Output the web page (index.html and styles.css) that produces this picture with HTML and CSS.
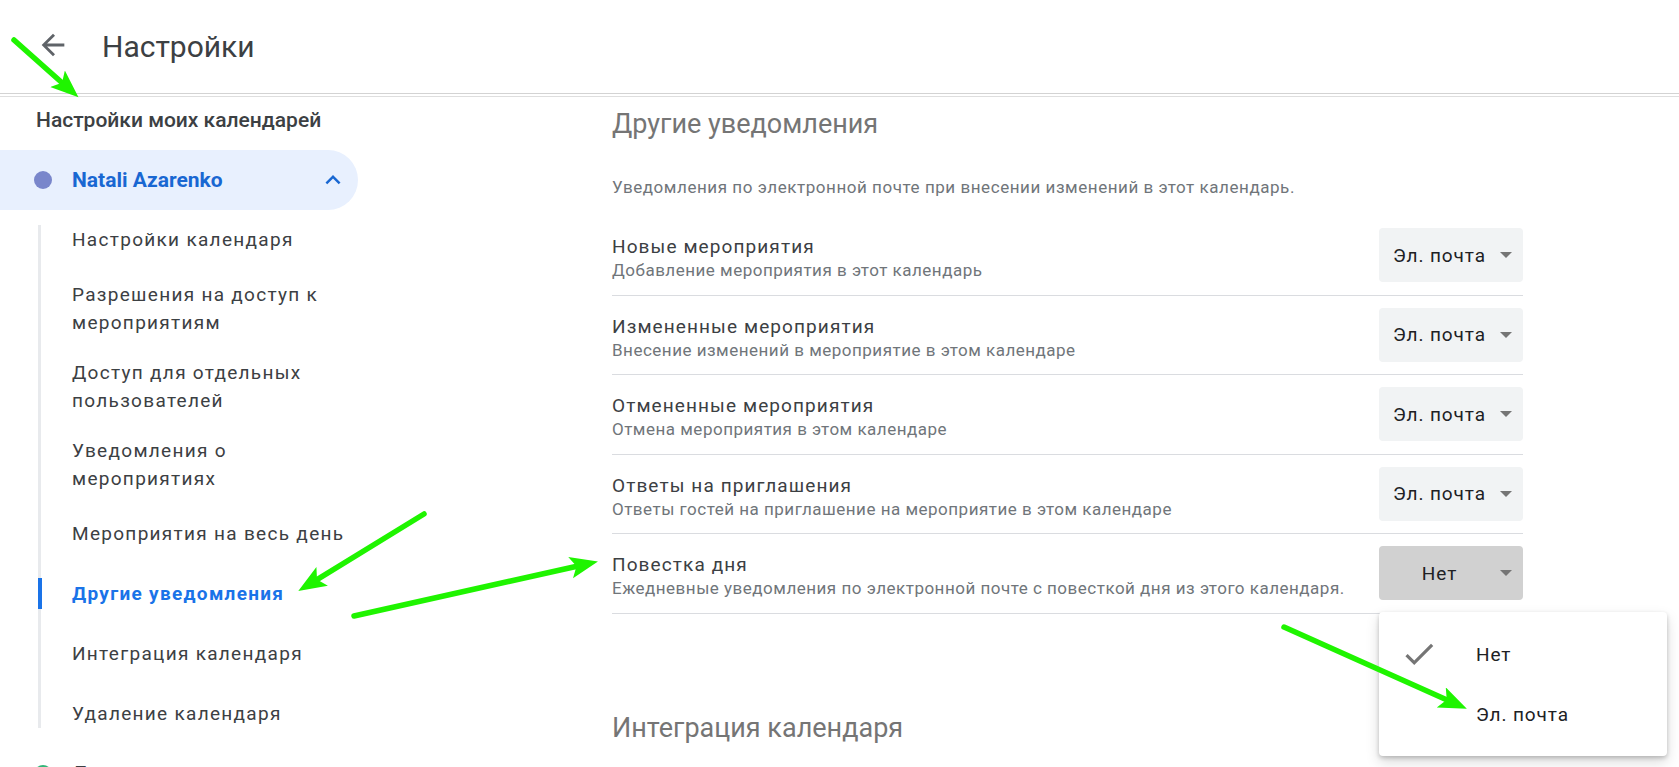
FILE: index.html
```html
<!DOCTYPE html>
<html lang="ru">
  <head>
    <meta charset="UTF-8" />
    <title>Настройки</title>
    <link rel="stylesheet" href="styles.css">
  </head>
  <body>
    <header class="topbar">
      <button class="back-button" aria-label="Назад">
        <svg viewBox="0 0 24 24"><path d="M20 11H7.83l5.59-5.59L12 4l-8 8 8 8 1.41-1.41L7.83 13H20v-2z"/></svg>
      </button>
      <h1 class="topbar-title">Настройки</h1>
    </header>

    <div class="layout">
      <nav class="sidebar">
        <div class="sidebar-heading">Настройки моих календарей</div>

        <div class="calendar-item open">
          <span class="calendar-dot"></span>
          <span class="calendar-name">Natali Azarenko</span>
          <svg class="calendar-chevron" viewBox="0 0 24 24"><path d="M7.41 15.41L12 10.83l4.59 4.58L18 14l-6-6-6 6z"/></svg>
        </div>

        <ul class="calendar-menu">
          <li>Настройки календаря</li>
          <li>Разрешения на доступ к мероприятиям</li>
          <li>Доступ для отдельных пользователей</li>
          <li>Уведомления о мероприятиях</li>
          <li>Мероприятия на весь день</li>
          <li class="active">Другие уведомления</li>
          <li>Интеграция календаря</li>
          <li>Удаление календаря</li>
        </ul>

        <div class="calendar-item">
          <span class="calendar-dot birthdays"></span>
          <span class="calendar-name">Дни рождения</span>
        </div>
      </nav>

      <main class="content">
        <section class="settings-section">
          <h2 class="section-title">Другие уведомления</h2>
          <p class="section-description">Уведомления по электронной почте при внесении изменений в этот календарь.</p>

          <div class="setting-list">
            <div class="setting-row">
              <div class="setting-text">
                <div class="setting-label">Новые мероприятия</div>
                <div class="setting-hint">Добавление мероприятия в этот календарь</div>
              </div>
              <div class="select"><span class="select-value">Эл. почта</span><span class="select-arrow"></span></div>
            </div>

            <div class="setting-row">
              <div class="setting-text">
                <div class="setting-label">Измененные мероприятия</div>
                <div class="setting-hint">Внесение изменений в мероприятие в этом календаре</div>
              </div>
              <div class="select"><span class="select-value">Эл. почта</span><span class="select-arrow"></span></div>
            </div>

            <div class="setting-row">
              <div class="setting-text">
                <div class="setting-label">Отмененные мероприятия</div>
                <div class="setting-hint">Отмена мероприятия в этом календаре</div>
              </div>
              <div class="select"><span class="select-value">Эл. почта</span><span class="select-arrow"></span></div>
            </div>

            <div class="setting-row">
              <div class="setting-text">
                <div class="setting-label">Ответы на приглашения</div>
                <div class="setting-hint">Ответы гостей на приглашение на мероприятие в этом календаре</div>
              </div>
              <div class="select"><span class="select-value">Эл. почта</span><span class="select-arrow"></span></div>
            </div>

            <div class="setting-row">
              <div class="setting-text">
                <div class="setting-label">Повестка дня</div>
                <div class="setting-hint">Ежедневные уведомления по электронной почте с повесткой дня из этого календаря.</div>
              </div>
              <div class="select pressed">
                <span class="select-value">Нет</span><span class="select-arrow"></span>
                <div class="select-menu">
                  <div class="select-option">
                    <svg class="option-check" viewBox="0 0 24 24"><path d="M9 16.17L4.83 12l-1.42 1.41L9 19 21 7l-1.41-1.41z"/></svg>
                    <span>Нет</span>
                  </div>
                  <div class="select-option">
                    <span class="option-check"></span>
                    <span>Эл. почта</span>
                  </div>
                </div>
              </div>
            </div>
          </div>
        </section>

        <section class="settings-section next">
          <h2 class="section-title">Интеграция календаря</h2>
        </section>
      </main>
    </div>

    <!-- green arrows drawn over the screenshot -->
    <svg class="annotations" viewBox="0 0 1679 767">
      <defs>
        <marker id="head" markerUnits="userSpaceOnUse" markerWidth="30" markerHeight="24" refX="18" refY="11" orient="auto">
          <path d="M0 0 L28 11 L0 22 L6 11 z" fill="#1ff400"/>
        </marker>
      </defs>
      <g stroke="#1ff400" stroke-width="5.5" stroke-linecap="round" fill="none" marker-end="url(#head)">
        <line x1="14" y1="40" x2="71" y2="90.7"/>
        <line x1="424" y1="514" x2="306.8" y2="585.8"/>
        <line x1="354" y1="616" x2="588.2" y2="563.7"/>
        <line x1="1284" y1="627" x2="1457.7" y2="704.7"/>
      </g>
    </svg>
  </body>
</html>
```

FILE: styles.css
```css
:root {
  --text-dark: #3c4043;
  --text-gray: #70757a;
  --text-black: #202124;
  --blue: #1a73e8;
  --blue-dark: #1967d2;
  --line: #dadce0;
  --select-bg: #f1f3f4;
}

* {
  margin: 0;
  padding: 0;
  box-sizing: border-box;
}

body {
  font-family: Roboto, 'Liberation Sans', Arial, sans-serif;
  background-color: #ffffff;
  color: var(--text-dark);
  width: 1679px;
  height: 767px;
  overflow: hidden;
  position: relative;
}

/* Top bar */
.topbar {
  height: 94px;
  display: flex;
  align-items: center;
  border-bottom: 1px solid #d3d3d3;
  box-shadow: 0 2px 0 #ffffff, 0 3px 0 #dedede;
}

.back-button {
  width: 34px;
  height: 34px;
  margin-left: 36px;
  margin-bottom: 3px;
  border: none;
  background: none;
  cursor: pointer;
}

.back-button svg {
  width: 34px;
  height: 34px;
  fill: #5f6368;
  display: block;
}

.topbar-title {
  margin-left: 32px;
  font-size: 30px;
  font-weight: 400;
  line-height: 36px;
  color: var(--text-dark);
}

.layout {
  display: flex;
  align-items: flex-start;
}

/* Sidebar */
.sidebar {
  width: 358px;
  flex-shrink: 0;
}

.sidebar-heading {
  margin-top: 12px;
  padding-left: 36px;
  font-size: 21px;
  font-weight: 500;
  line-height: 28px;
  color: var(--text-dark);
}

.calendar-item {
  height: 60px;
  margin-top: 15.5px;
  padding-left: 34px;
  display: flex;
  align-items: center;
  border-radius: 0 30px 30px 0;
}

.calendar-item.open {
  background-color: #e8f0fe;
}

.calendar-item + .calendar-menu + .calendar-item {
  margin-top: 0;
}

.calendar-dot {
  width: 18px;
  height: 18px;
  border-radius: 50%;
  background-color: #7986cb;
  flex-shrink: 0;
}

.calendar-dot.birthdays {
  background-color: #33b679;
}

.calendar-name {
  margin-left: 20px;
  font-size: 21px;
  font-weight: 700;
  color: var(--text-dark);
}

.open .calendar-name {
  color: var(--blue-dark);
}

.calendar-chevron {
  width: 30px;
  height: 30px;
  margin-left: auto;
  margin-right: 10px;
  fill: var(--blue-dark);
}

.calendar-menu {
  list-style: none;
  margin-left: 38px;
  position: relative;
}

.calendar-menu::before {
  content: "";
  position: absolute;
  left: 0;
  top: 15px;
  bottom: 16px;
  width: 3px;
  background-color: #e8eaed;
}

.calendar-menu li {
  position: relative;
  min-height: 60px;
  padding: 11px 6px 11px 34px;
  display: flex;
  align-items: center;
  font-size: 19px;
  line-height: 28px;
  letter-spacing: 1.3px;
  color: var(--text-dark);
  cursor: pointer;
}

.calendar-menu li.active {
  color: var(--blue);
  font-weight: 700;
  letter-spacing: 1.3px;
}

.calendar-menu li.active::before {
  content: "";
  position: absolute;
  left: 0;
  top: 14.5px;
  height: 31px;
  width: 4px;
  background-color: var(--blue);
}

/* Content */
.content {
  margin-left: 254px;
  width: 911px;
}

.settings-section {
  padding-top: 12px;
}

.settings-section.next {
  padding-top: 96.5px;
}

.section-title {
  font-size: 27px;
  font-weight: 400;
  line-height: 36px;
  color: #757575;
}

.section-description {
  margin-top: 34px;
  font-size: 17px;
  line-height: 22px;
  letter-spacing: 0.55px;
  color: var(--text-gray);
}

.setting-list {
  margin-top: 18px;
}

.setting-row {
  display: flex;
  align-items: center;
  justify-content: space-between;
  padding: 12.25px 0;
  border-bottom: 1px solid var(--line);
}

.setting-text {
  padding-top: 6px;
}

.setting-label {
  font-size: 19px;
  line-height: 24px;
  letter-spacing: 1.1px;
  color: var(--text-dark);
}

.setting-hint {
  font-size: 17px;
  line-height: 22.5px;
  letter-spacing: 0.5px;
  color: var(--text-gray);
}

/* Select */
.select {
  position: relative;
  width: 144px;
  height: 54px;
  flex-shrink: 0;
  display: flex;
  align-items: center;
  padding-right: 11px;
  background-color: var(--select-bg);
  border-radius: 4px;
  cursor: pointer;
}

.select.pressed {
  background-color: #d1d1d1;
}

.select-value {
  flex: 1;
  text-align: center;
  font-size: 19px;
  letter-spacing: 0.9px;
  color: var(--text-black);
}

.select-arrow {
  width: 0;
  height: 0;
  border-left: 6px solid transparent;
  border-right: 6px solid transparent;
  border-top: 6px solid #757575;
}

.select-menu {
  position: absolute;
  top: calc(100% + 12px);
  left: 0;
  width: 288px;
  padding: 12px 0;
  background-color: #ffffff;
  border-radius: 4px;
  box-shadow: 0 2px 4px rgba(0, 0, 0, 0.2), 0 6px 14px rgba(0, 0, 0, 0.15);
  z-index: 5;
}

.select-option {
  height: 60px;
  display: flex;
  align-items: center;
  padding-left: 21px;
  font-size: 19px;
  letter-spacing: 0.9px;
  color: var(--text-black);
}

.option-check {
  width: 38px;
  height: 38px;
  margin-right: 38px;
  fill: #757575;
  flex-shrink: 0;
}

.annotations {
  position: absolute;
  top: 0;
  left: 0;
  width: 1679px;
  height: 767px;
  pointer-events: none;
  z-index: 10;
}
```
